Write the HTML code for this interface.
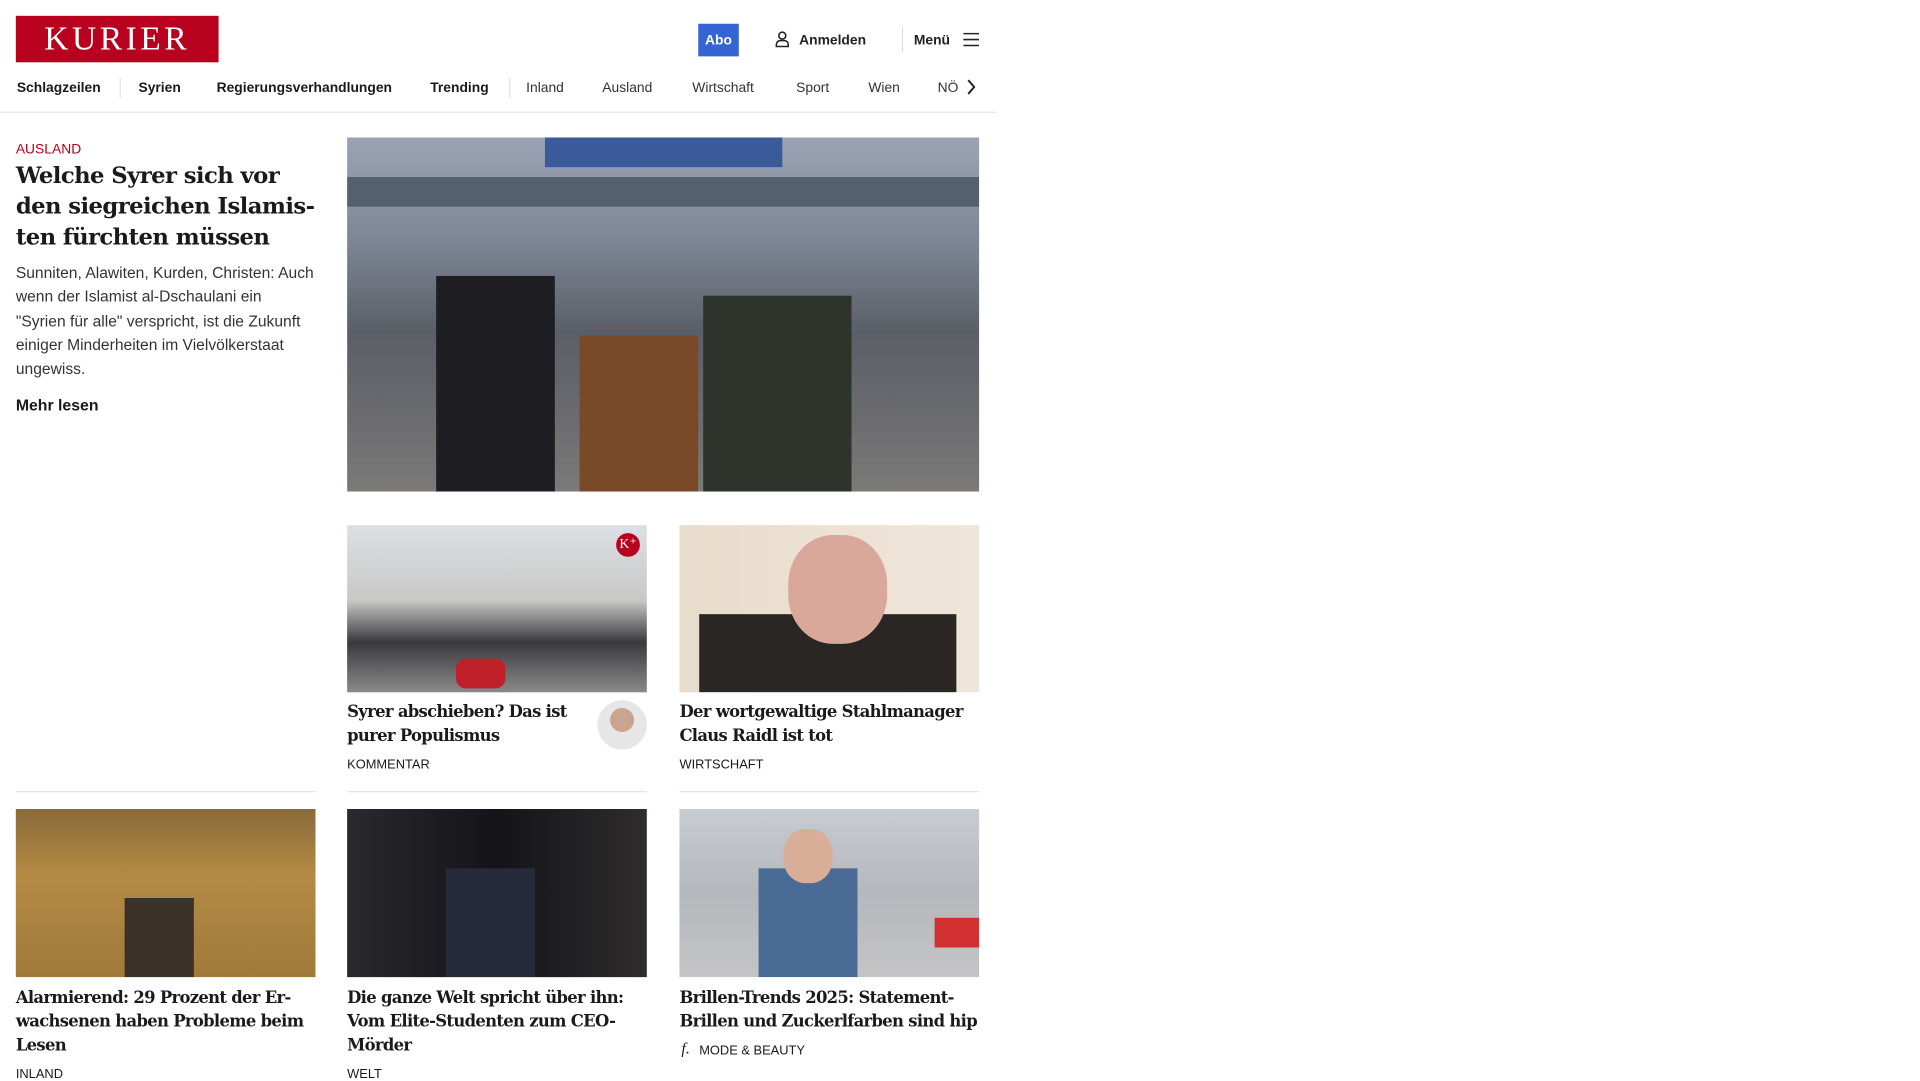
<!DOCTYPE html>
<html><head><meta charset="utf-8"><style>
*{margin:0;padding:0;box-sizing:border-box}
body{width:1920px;height:1080px;background:#fff;font-family:"Liberation Sans",sans-serif;color:#1a1a1a;position:relative;overflow:hidden}
#w{position:absolute;left:0;top:0;width:1941px;height:1092px;transform:scale(0.989);transform-origin:0 0}
.a{position:absolute;white-space:nowrap}
.logo{left:16px;top:16px;width:205px;height:47px;background:#b8001f;color:#fff;font-family:"Liberation Serif",serif;font-size:34px;letter-spacing:3.5px;text-align:center;line-height:48px}
.nav{top:80px;font-size:14px;color:#333}
.navb{font-weight:bold;color:#1a1a1a}
.sep{width:1px;background:#ddd}
.slab{font-family:"DejaVu Serif",serif;font-weight:bold;color:#1a1a1a;letter-spacing:-0.5px}
.t2{font-size:16.6px;line-height:24px;letter-spacing:-0.7px}
.cat{font-size:13px;color:#1a1a1a;text-transform:uppercase}
.img{position:absolute;overflow:hidden}
.hr{position:absolute;height:1px;background:#ddd;top:800px}
</style></head><body><div id="w">
<div class="a logo">KURIER</div>
<div class="a" style="left:706px;top:24px;width:41px;height:33px;background:#3564d4;color:#fff;font-size:14px;font-weight:bold;text-align:center;line-height:33px">Abo</div>
<svg class="a" style="left:783px;top:31px" width="16" height="17" viewBox="0 0 16 17"><circle cx="8" cy="5" r="3.5" fill="none" stroke="#222" stroke-width="1.6"/><path d="M2 16v-2a4 4 0 0 1 4-4h4a4 4 0 0 1 4 4v2z" fill="none" stroke="#222" stroke-width="1.6"/></svg>
<div class="a" style="left:808px;top:32px;font-size:14px;font-weight:bold;color:#222">Anmelden</div>
<div class="a sep" style="left:912px;top:27px;height:26px"></div>
<div class="a" style="left:924px;top:32px;font-size:14px;font-weight:bold;color:#222">Menü</div>
<svg class="a" style="left:974px;top:33px" width="16" height="14"><path d="M0 1h16M0 7h16M0 13h16" stroke="#222" stroke-width="1.6"/></svg>

<div class="a nav navb" style="left:17px">Schlagzeilen</div>
<div class="a sep" style="left:121px;top:79px;height:20px"></div>
<div class="a nav navb" style="left:140px">Syrien</div>
<div class="a nav navb" style="left:219px">Regierungsverhandlungen</div>
<div class="a nav navb" style="left:435px">Trending</div>
<div class="a sep" style="left:515px;top:79px;height:20px"></div>
<div class="a nav" style="left:532px">Inland</div>
<div class="a nav" style="left:609px">Ausland</div>
<div class="a nav" style="left:700px">Wirtschaft</div>
<div class="a nav" style="left:805px">Sport</div>
<div class="a nav" style="left:878px">Wien</div>
<div class="a nav" style="left:948px">NÖ</div>
<svg class="a" style="left:977px;top:79px" width="10" height="18"><path d="M2 2l6 7-6 7" fill="none" stroke="#222" stroke-width="2"/></svg>
<div class="a" style="left:0;top:113px;width:1007px;height:1px;background:#ddd"></div>

<div class="a" style="left:16px;top:142px;font-size:14px;color:#b8001f">AUSLAND</div>
<div class="a slab" style="left:16px;top:162px;font-size:23px;line-height:31px;letter-spacing:-0.6px">Welche Syrer sich vor<br>den siegreichen Islamis-<br>ten fürchten müssen</div>
<div class="a" style="left:16px;top:265px;font-size:15.8px;line-height:24.3px;color:#333">Sunniten, Alawiten, Kurden, Christen: Auch<br>wenn der Islamist al-Dschaulani ein<br>"Syrien für alle" verspricht, ist die Zukunft<br>einiger Minderheiten im Vielvölkerstaat<br>ungewiss.</div>
<div class="a" style="left:16px;top:402px;font-size:16px;font-weight:bold">Mehr lesen</div>

<div class="img" style="left:351px;top:139px;width:639px;height:358px;background:linear-gradient(180deg,#9aa4b4 0%,#7d8594 30%,#5a5f66 55%,#6c6c70 80%,#7b7a78 100%)">
<div style="position:absolute;left:200px;top:0;width:240px;height:30px;background:#3a5a9a"></div>
<div style="position:absolute;left:0;top:40px;width:639px;height:30px;background:#55606e"></div>
<div style="position:absolute;left:90px;top:140px;width:120px;height:218px;background:#1e1e22"></div>
<div style="position:absolute;left:235px;top:200px;width:120px;height:158px;background:#7a4a28"></div>
<div style="position:absolute;left:360px;top:160px;width:150px;height:198px;background:#2e342c"></div>
</div>

<div class="img" style="left:351px;top:531px;width:303px;height:169px;background:linear-gradient(180deg,#dcdfe4 0%,#c8c8c6 45%,#3a3a3e 70%,#8a8a8a 100%)">
<div style="position:absolute;left:272px;top:8px;width:24px;height:24px;border-radius:50%;background:#b8001f;color:#fff;font-family:'Liberation Serif',serif;font-size:14px;text-align:center;line-height:24px">K⁺</div>
<div style="position:absolute;left:110px;top:135px;width:50px;height:30px;background:#c0202a;border-radius:10px"></div>
</div>
<div class="a slab t2" style="left:351px;top:707px">Syrer abschieben? Das ist<br>purer Populismus</div>
<div class="a" style="left:604px;top:708px;width:50px;height:50px;border-radius:50%;background:radial-gradient(circle at 50% 40%,#c9a48e 0 30%,#e6e6e6 32%)"></div>
<div class="a cat" style="left:351px;top:765px">Kommentar</div>

<div class="img" style="left:687px;top:531px;width:303px;height:169px;background:linear-gradient(90deg,#e8dccb 0%,#efe6da 100%)">
<div style="position:absolute;left:20px;top:90px;width:260px;height:79px;background:#2a2624"></div>
<div style="position:absolute;left:110px;top:10px;width:100px;height:110px;border-radius:45%;background:#d9a89a"></div>
</div>
<div class="a slab t2" style="left:687px;top:707px">Der wortgewaltige Stahlmanager<br>Claus Raidl ist tot</div>
<div class="a cat" style="left:687px;top:765px">Wirtschaft</div>

<div class="hr" style="left:16px;width:303px"></div>
<div class="hr" style="left:351px;width:303px"></div>
<div class="hr" style="left:687px;width:303px"></div>

<div class="img" style="left:16px;top:818px;width:303px;height:170px;background:linear-gradient(180deg,#8a6a3a 0%,#b48a44 40%,#a07a3a 100%)">
<div style="position:absolute;left:110px;top:90px;width:70px;height:80px;background:#3a3228"></div>
</div>
<div class="a slab t2" style="left:16px;top:996px">Alarmierend: 29 Prozent der Er-<br>wachsenen haben Probleme beim<br>Lesen</div>
<div class="a cat" style="left:16px;top:1078px">Inland</div>

<div class="img" style="left:351px;top:818px;width:303px;height:170px;background:linear-gradient(90deg,#2a2a2e 0%,#141418 50%,#2e2c2c 100%)">
<div style="position:absolute;left:100px;top:60px;width:90px;height:110px;background:#262a3a"></div>
</div>
<div class="a slab t2" style="left:351px;top:996px">Die ganze Welt spricht über ihn:<br>Vom Elite-Studenten zum CEO-<br>Mörder</div>
<div class="a cat" style="left:351px;top:1078px">Welt</div>

<div class="img" style="left:687px;top:818px;width:303px;height:170px;background:linear-gradient(180deg,#c8ccd2 0%,#b4b8bc 50%,#c4c4c6 100%)">
<div style="position:absolute;left:80px;top:60px;width:100px;height:110px;background:#4a6a96"></div>
<div style="position:absolute;left:105px;top:20px;width:50px;height:55px;border-radius:45%;background:#d8ae98"></div>
<div style="position:absolute;left:258px;top:110px;width:45px;height:30px;background:#d03030"></div>
</div>
<div class="a slab t2" style="left:687px;top:996px">Brillen-Trends 2025: Statement-<br>Brillen und Zuckerlfarben sind hip</div>
<div class="a" style="left:689px;top:1052px;font-family:'Liberation Serif',serif;font-style:italic;font-size:16px">f.</div>
<div class="a cat" style="left:707px;top:1054px">Mode &amp; Beauty</div>
</div></body></html>
